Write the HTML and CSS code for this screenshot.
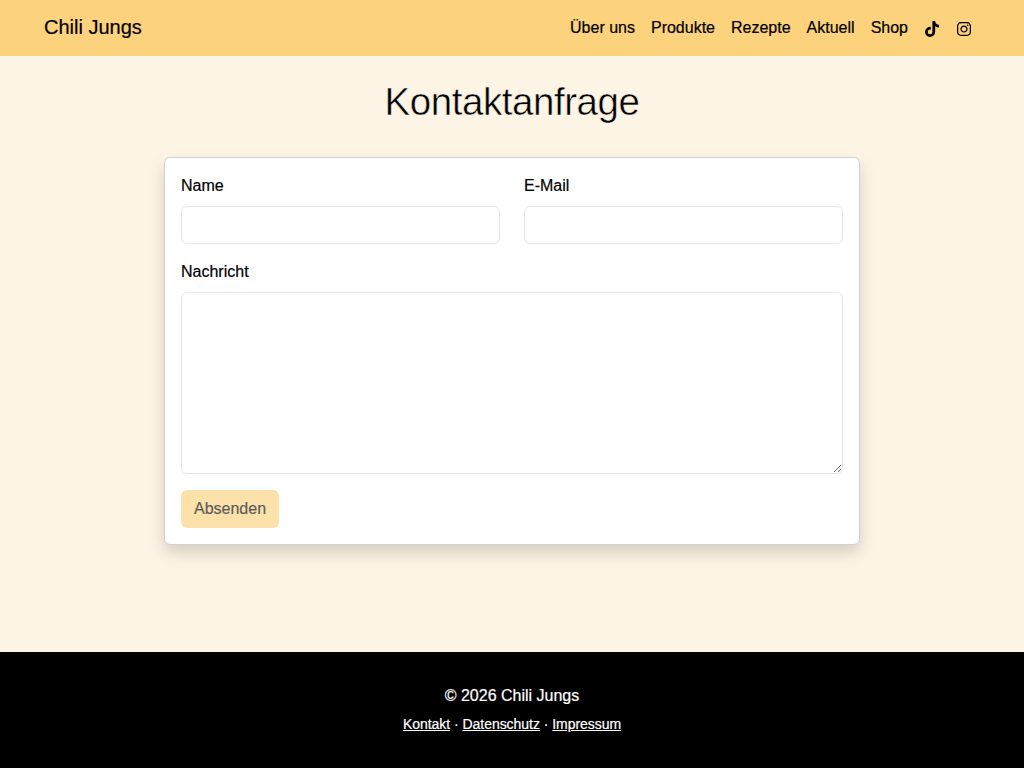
FILE: index.html
```html
<!DOCTYPE html>
<html lang="de">
<head>
<meta charset="utf-8">
<title>Kontaktanfrage – Chili Jungs</title>
<link rel="stylesheet" href="styles.css">
</head>
<body>
<nav class="navbar">
  <div class="container">
    <a class="brand" href="#">Chili Jungs</a>
    <ul class="nav">
      <li><a href="#">Über uns</a></li>
      <li><a href="#">Produkte</a></li>
      <li><a href="#">Rezepte</a></li>
      <li><a href="#">Aktuell</a></li>
      <li><a href="#">Shop</a></li>
      <li><a href="#" aria-label="TikTok"><svg class="icon" viewBox="-32 0 512 512"><path d="M448 209.91a210.06 210.06 0 0 1-122.77-39.25v178.72A162.55 162.55 0 1 1 185 188.31v89.89a74.62 74.62 0 1 0 52.23 71.18V0h88a121.18 121.18 0 0 0 1.86 22.17A122.18 122.18 0 0 0 381 102.39a121.43 121.43 0 0 0 67 20.14z"/></svg></a></li>
      <li><a href="#" aria-label="Instagram"><svg class="icon" viewBox="-32 0 512 512"><path d="M224.1 141c-63.6 0-114.9 51.3-114.9 114.9s51.3 114.9 114.9 114.9S339 319.500 339 255.900 287.700 141 224.100 141zm0 189.600c-41.100 0-74.700-33.500-74.700-74.700s33.500-74.700 74.700-74.700 74.700 33.500 74.700 74.700-33.600 74.700-74.700 74.700zm146.400-194.300c0 14.900-12 26.800-26.800 26.800-14.900 0-26.800-12-26.800-26.800s12-26.800 26.800-26.800 26.800 12 26.800 26.800zm76.100 27.200c-1.700-35.900-9.900-67.700-36.200-93.900-26.200-26.200-58-34.400-93.900-36.200-37-2.100-147.900-2.100-184.900 0-35.800 1.700-67.600 9.900-93.900 36.100s-34.400 58-36.200 93.900c-2.100 37-2.100 147.900 0 184.900 1.700 35.900 9.900 67.700 36.200 93.900s58 34.400 93.900 36.200c37 2.100 147.900 2.100 184.900 0 35.900-1.700 67.700-9.900 93.900-36.200 26.200-26.200 34.400-58 36.200-93.900 2.100-37 2.100-147.800 0-184.800zM398.800 388c-7.800 19.600-22.900 34.700-42.600 42.600-29.500 11.700-99.500 9-132.100 9s-102.700 2.600-132.100-9c-19.600-7.800-34.700-22.900-42.600-42.600-11.700-29.500-9-99.500-9-132.100s-2.600-102.700 9-132.100c7.800-19.600 22.900-34.700 42.600-42.600 29.500-11.700 99.500-9 132.100-9s102.700-2.600 132.100 9c19.600 7.800 34.700 22.900 42.600 42.600 11.700 29.500 9 99.500 9 132.100s2.700 102.700-9 132.100z"/></svg></a></li>
    </ul>
  </div>
</nav>
<main class="main">
  <h1 class="title">Kontaktanfrage</h1>
  <form class="card">
    <div class="row">
      <div class="field">
        <label for="name">Name</label>
        <input id="name" class="control" type="text">
      </div>
      <div class="field">
        <label for="email">E-Mail</label>
        <input id="email" class="control" type="email">
      </div>
    </div>
    <div class="field">
      <label for="message">Nachricht</label>
      <textarea id="message" class="control message"></textarea>
    </div>
    <button class="submit" type="submit" disabled>Absenden</button>
  </form>
</main>
<footer class="footer">
  <div class="copyright">© 2026 Chili Jungs</div>
  <div class="links"><a href="#">Kontakt</a> · <a href="#">Datenschutz</a> · <a href="#">Impressum</a></div>
</footer>
</body>
</html>
```
FILE: styles.css
```css
*, *::before, *::after { box-sizing: border-box; }

body {
  margin: 0;
  min-height: 100vh;
  display: flex;
  flex-direction: column;
  background: #fcf4e4;
  color: #000;
  font: 16px/24px "Helvetica Neue", "Liberation Sans", Arial, sans-serif;
  -webkit-text-stroke: 0.2px currentColor;
}

a { color: inherit; }

.navbar { background: #fcd27d; padding: 8px 0; }
.container {
  width: 960px;
  margin: 0 auto;
  padding: 0 12px;
  display: flex;
  align-items: center;
  justify-content: space-between;
}
.brand { font-size: 20px; line-height: 30px; padding-bottom: 2px; text-decoration: none; }
.nav { display: flex; list-style: none; margin: 0; padding: 0; }
.nav a { display: block; padding: 8px; height: 40px; text-decoration: none; }
.icon { display: block; width: 16px; height: 16px; margin-top: 5px; }

.main { flex: 1; padding-top: 22px; }
.title {
  margin: 0 0 31px;
  font-size: 38.5px;
  line-height: 48px;
  font-weight: 300;
  letter-spacing: -0.45px;
  text-align: center;
  -webkit-text-stroke: 0.5px #fcf4e4;
}

.card {
  width: 696px;
  margin: 0 auto;
  padding: 16px;
  display: flex;
  flex-direction: column;
  align-items: stretch;
  gap: 16px;
  background: #fff;
  border: 1px solid #d1d2d3;
  border-radius: 6px;
  box-shadow: 0 8px 16px rgba(0, 0, 0, 0.15);
}
.row { display: grid; grid-template-columns: 1fr 1fr; gap: 24px; }
.field { display: flex; flex-direction: column; gap: 8px; }
.control {
  display: block;
  width: 100%;
  height: 38px;
  margin: 0;
  padding: 6px 12px;
  background: #fff;
  border: 1px solid #e2e6ec;
  border-radius: 6px;
  font: inherit;
}
.message { height: 182px; resize: vertical; }
.submit {
  align-self: flex-start;
  width: 98px;
  height: 38px;
  padding: 0;
  border: 0;
  border-radius: 6px;
  background: #fcd27d;
  color: #000;
  font: inherit;
  opacity: 0.65;
}

.footer {
  height: 116px;
  padding-top: 32px;
  background: #000;
  color: #fff;
  text-align: center;
}
.links { margin-top: 6px; font-size: 14px; line-height: 21px; letter-spacing: -0.04px; }
.links a { text-underline-offset: 1px; }
```
